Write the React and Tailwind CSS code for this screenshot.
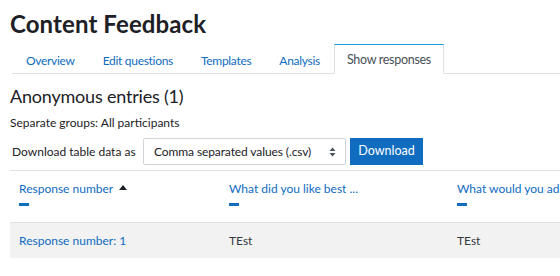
import React from "react";

const tabs = ["Overview", "Edit questions", "Templates", "Analysis"];

function SortDash() {
  return <span className="block w-[10px] h-[3px] bg-[#0f6cbf] mt-[6px]" />;
}

export default function App() {
  return (
    <div className="w-[560px] h-[276px] overflow-hidden bg-white text-[#1d2125] font-['Lato',sans-serif]">
      <div className="pl-[10px] pt-[9px]">
        <h1 className="text-[24px] font-bold leading-[30px] tracking-[0.1px]">
          Content Feedback
        </h1>

        {/* tabs */}
        <div className="mt-[5px] ml-[2px] flex border-b border-[#dee2e6] h-[30px] w-[600px]">
          {tabs.map((t) => (
            <div
              key={t}
              className="border border-transparent px-[13px] pt-[7px] text-[12px] tracking-[-0.3px] text-[#0f6cbf] whitespace-nowrap"
            >
              {t}
            </div>
          ))}
          <div className="relative -mb-px bg-white border border-[#dee2e6] border-t-[#1a9ce0] border-b-white px-[12px] pt-[6px] text-[12.5px] tracking-[-0.3px] text-[#495057] whitespace-nowrap">
            Show responses
          </div>
        </div>

        <h2 className="mt-[11px] text-[18px] leading-[22px] font-normal tracking-[-0.2px]">
          Anonymous entries (1)
        </h2>
        <div className="mt-[8px] text-[12px] leading-[16px]">
          Separate groups: All participants
        </div>

        {/* download */}
        <div className="mt-[7px] flex items-center text-[12px]">
          <span className="ml-[2px] w-[131px]">Download table data as</span>
          <div className="w-[203px] h-[27px] border border-[#ced4da] rounded-[2px] flex items-center justify-between pl-[10px] pr-[9px]">
            <span className="tracking-[-0.1px]">Comma separated values (.csv)</span>
            <svg width="7" height="10" viewBox="0 0 7 10">
              <path d="M3.5 0.5 L6.5 4 H0.5 Z M3.5 9.5 L6.5 6 H0.5 Z" fill="#495057" />
            </svg>
          </div>
          <button className="ml-[4px] h-[27px] w-[73px] bg-[#0f6cbf] text-white text-[12.5px]">
            Download
          </button>
        </div>

        {/* table */}
        <div className="mt-[5px] w-[700px] border-t border-[#dee2e6] text-[12px]">
          <div className="flex h-[52px] border-b border-[#dee2e6] pt-[10px]">
            <div className="w-[219px] pl-[9px]">
              <div className="flex items-center text-[#0f6cbf] leading-[16px]">
                Response number
                <svg className="ml-[6px] -mt-[4px]" width="8" height="5" viewBox="0 0 8 5">
                  <path d="M4 0 L8 5 H0 Z" fill="#1d2125" />
                </svg>
              </div>
              <SortDash />
            </div>
            <div className="w-[228px]">
              <div className="text-[#0f6cbf] leading-[16px]">What did you like best ...</div>
              <SortDash />
            </div>
            <div className="w-[103px] overflow-hidden">
              <div className="text-[#0f6cbf] leading-[16px] whitespace-nowrap">What would you add</div>
              <SortDash />
            </div>
          </div>
          <div className="flex h-[35px] items-center bg-[#f2f2f2]">
            <div className="w-[219px] pl-[9px] text-[#0f6cbf]">Response number: 1</div>
            <div className="w-[228px] text-[#343a40]">TEst</div>
            <div className="text-[#343a40]">TEst</div>
          </div>
        </div>
      </div>
    </div>
  );
}
